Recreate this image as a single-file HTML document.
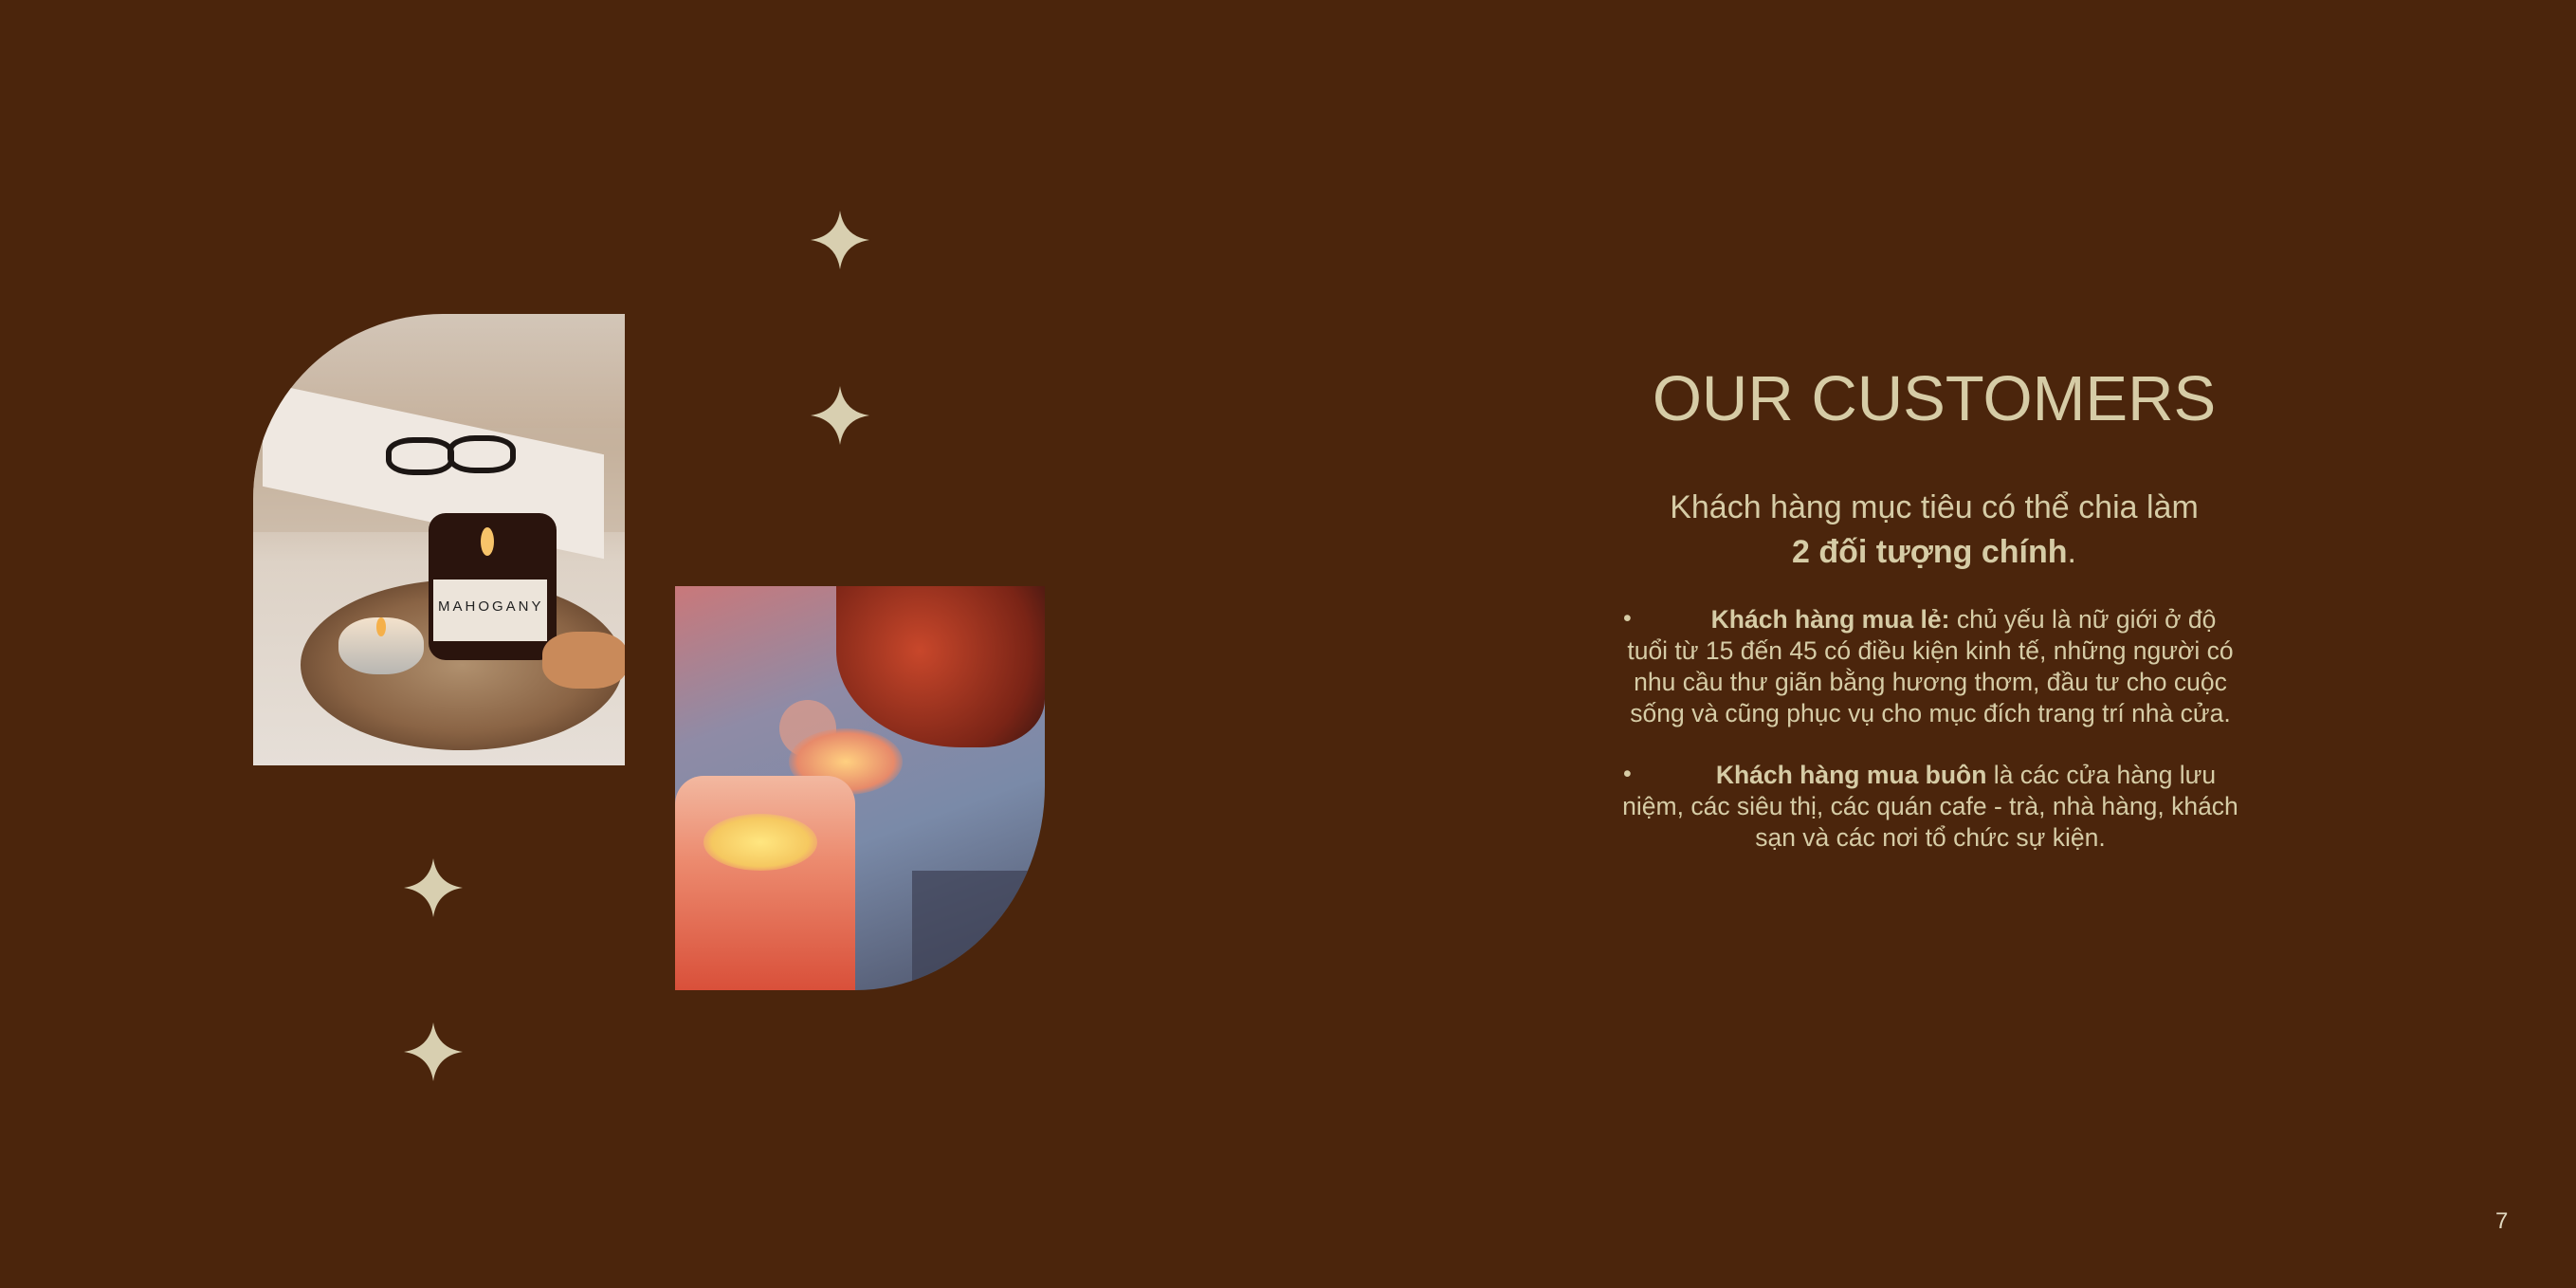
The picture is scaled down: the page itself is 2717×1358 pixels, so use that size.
<!DOCTYPE html>
<html><head><meta charset="utf-8"><style>
html,body{margin:0;padding:0}
body{width:2717px;height:1358px;background:#4b250c;position:relative;overflow:hidden;font-family:"Liberation Sans",sans-serif;color:#d9cfb0}
.star{position:absolute;width:64px;height:64px}
.img1{position:absolute;left:267px;top:331px;width:392px;height:476px;border-top-left-radius:200px 195px;overflow:hidden;background:linear-gradient(180deg,#d3c6b8 0%,#c4ae98 30%,#ddd2c6 55%,#e6dfd8 100%)}
.img2{position:absolute;left:712px;top:618px;width:390px;height:426px;border-bottom-right-radius:200px 215px;overflow:hidden;background:linear-gradient(160deg,#c9787a 0%,#8f8ba6 30%,#7a8aa8 60%,#4c5268 100%)}
.ab{position:absolute}
h1{position:absolute;left:1630px;width:820px;top:382px;margin:0;text-align:center;font-weight:normal;font-size:67px;letter-spacing:0;color:#d6cca6}
.sub{position:absolute;left:1640px;width:800px;top:512px;text-align:center;font-size:34px;line-height:47px;color:#d6cca6}
.bl{position:absolute;left:1636px;width:800px;text-align:center;font-size:26.5px;line-height:33px;color:#d6cca6;white-space:nowrap}
.dot{position:absolute;left:1712px;font-size:25px;color:#d6cca6}
</style></head><body>
<svg width="0" height="0" style="position:absolute"><defs><symbol id="s" viewBox="-32 -32 64 64"><path d="M0,-31 Q4,-4 31,0 Q4,4 0,31 Q-4,4 -31,0 Q-4,-4 0,-31Z" fill="#d8cfb0"/></symbol></defs></svg>
<svg class="star" style="left:854px;top:221px"><use href="#s"/></svg>
<svg class="star" style="left:854px;top:406px"><use href="#s"/></svg>
<svg class="star" style="left:425px;top:904px"><use href="#s"/></svg>
<svg class="star" style="left:425px;top:1077px"><use href="#s"/></svg>

<div class="img1">
 <div class="ab" style="left:0;top:120px;width:392px;height:110px;background:#c7b4a0;opacity:.6"></div>
 <div class="ab" style="left:10px;top:110px;width:360px;height:110px;background:#efe8e1;transform:skewY(12deg)"></div>
 <div class="ab" style="left:140px;top:130px;width:60px;height:28px;border:6px solid #1c1614;border-radius:40%"></div>
 <div class="ab" style="left:205px;top:128px;width:60px;height:28px;border:6px solid #1c1614;border-radius:40%"></div>
 <div class="ab" style="left:50px;top:280px;width:340px;height:180px;border-radius:50%;background:radial-gradient(ellipse,#b0906e 0%,#8a6445 55%,#4a2e1c 100%)"></div>
 <div class="ab" style="left:185px;top:210px;width:135px;height:155px;border-radius:18px;background:#2a140d"></div>
 <div class="ab" style="left:190px;top:280px;width:120px;height:65px;background:#ece4da"></div>
 <div class="ab" style="left:195px;top:300px;font-size:15px;letter-spacing:3px;color:#222">MAHOGANY</div>
 <div class="ab" style="left:240px;top:225px;width:14px;height:30px;border-radius:50%;background:#f7c46a"></div>
 <div class="ab" style="left:90px;top:320px;width:90px;height:60px;border-radius:45%;background:linear-gradient(#f4e2cc,#b8b6b2)"></div>
 <div class="ab" style="left:130px;top:320px;width:10px;height:20px;border-radius:50%;background:#f5b04a"></div>
 <div class="ab" style="left:305px;top:335px;width:90px;height:60px;border-radius:40%;background:#c98a5a"></div>
</div>

<div class="img2">
 <div class="ab" style="left:170px;top:0;width:220px;height:170px;border-radius:0 0 30% 60%;background:radial-gradient(circle at 40% 40%,#c8472b,#7a2416 70%,#3a1610)"></div>
 <div class="ab" style="left:110px;top:120px;width:60px;height:60px;border-radius:50%;background:#f0a084;opacity:.6"></div>
 <div class="ab" style="left:120px;top:150px;width:120px;height:70px;border-radius:50%;background:radial-gradient(#ffd080,#e78a6a 60%,transparent 75%)"></div>
 <div class="ab" style="left:0;top:200px;width:190px;height:226px;border-radius:30px 30px 0 0;background:linear-gradient(#f2b8a0,#ec8a6e 40%,#d9503a 100%)"></div>
 <div class="ab" style="left:30px;top:240px;width:120px;height:60px;border-radius:50%;background:radial-gradient(#ffe680,#f5c860 60%,transparent 80%)"></div>
 <div class="ab" style="left:250px;top:300px;width:140px;height:126px;background:#3c3f52;opacity:.7"></div>
</div>

<h1>OUR CUSTOMERS</h1>
<div class="sub">Khách hàng mục tiêu có thể chia làm<br><b>2 đối tượng chính</b>.</div>

<div class="dot" style="top:638px">•</div>
<div class="bl" style="top:637px"><b style="margin-left:70px">Khách hàng mua lẻ:</b> chủ yếu là nữ giới ở độ<br>tuổi từ 15 đến 45 có điều kiện kinh tế, những người có<br>nhu cầu thư giãn bằng hương thơm, đầu tư cho cuộc<br>sống và cũng phục vụ cho mục đích trang trí nhà cửa.</div>
<div class="dot" style="top:802px">•</div>
<div class="bl" style="top:801px"><b style="margin-left:75px">Khách hàng mua buôn</b> là các cửa hàng lưu<br>niệm, các siêu thị, các quán cafe - trà, nhà hàng, khách<br>sạn và các nơi tổ chức sự kiện.</div>

<div class="ab" style="left:2632px;top:1274px;font-size:24px;color:#e0d8c0">7</div>
</body></html>
